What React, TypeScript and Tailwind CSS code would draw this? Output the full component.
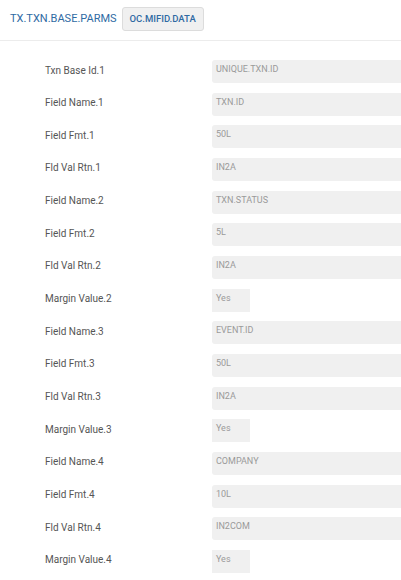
import React from "react";

type Row = { label: string; value: string; short?: boolean };

const rows: Row[] = [
  { label: "Txn Base Id.1", value: "UNIQUE.TXN.ID" },
  { label: "Field Name.1", value: "TXN.ID" },
  { label: "Field Fmt.1", value: "50L" },
  { label: "Fld Val Rtn.1", value: "IN2A" },
  { label: "Field Name.2", value: "TXN.STATUS" },
  { label: "Field Fmt.2", value: "5L" },
  { label: "Fld Val Rtn.2", value: "IN2A" },
  { label: "Margin Value.2", value: "Yes", short: true },
  { label: "Field Name.3", value: "EVENT.ID" },
  { label: "Field Fmt.3", value: "50L" },
  { label: "Fld Val Rtn.3", value: "IN2A" },
  { label: "Margin Value.3", value: "Yes", short: true },
  { label: "Field Name.4", value: "COMPANY" },
  { label: "Field Fmt.4", value: "10L" },
  { label: "Fld Val Rtn.4", value: "IN2COM" },
  { label: "Margin Value.4", value: "Yes", short: true },
];

export default function App() {
  return (
    <div className="w-[401px] h-[580px] overflow-hidden bg-white font-['Roboto',sans-serif]">
      {/* header */}
      <div className="flex items-center h-[41px] pl-[10px] pb-[7px] pt-[5px] gap-[5px] border-b border-[#ececec]">
        <span className="text-[11px] text-[#2f6aa3]">TX.TXN.BASE.PARMS</span>
        <button className="h-[24px] px-[7px] rounded-[3px] bg-[#f0f0f0] border border-[#dcdcdc] text-[9.5px] font-medium text-[#2f6aa3]">
          OC.MIFID.DATA
        </button>
      </div>

      <div className="flex flex-col gap-[9.67px] pt-[19px]">
        {rows.map((r, i) => (
          <div key={i} className="flex items-center h-[23px]">
            <div className="w-[212px] pl-[45px] text-[10px] text-[#555] leading-none -mt-[2px]">{r.label}</div>
            <div
              className={`h-[23px] bg-[#f0f0f0] pl-[4px] pt-[5px] text-[9px] leading-none text-[#9a9a9a] ${
                r.short ? "w-[38px]" : "flex-1 rounded-l-[3px]"
              }`}
            >
              {r.value}
            </div>
          </div>
        ))}
      </div>
    </div>
  );
}
